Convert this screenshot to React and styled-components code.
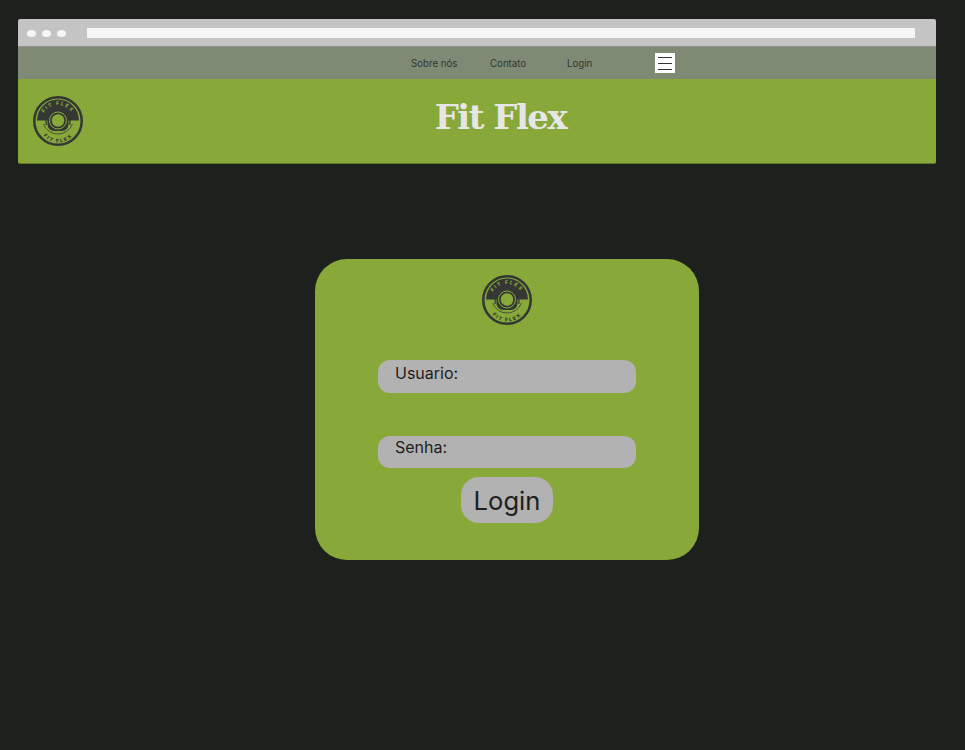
import React from "react";
import styled, { createGlobalStyle } from "styled-components";

const GlobalStyle = createGlobalStyle`
  html, body {
    margin: 0;
    padding: 0;
    background: #1e201d;
  }
  * {
    box-sizing: border-box;
  }
`;

const Logo = ({ size, id }) => (
  <LogoSvg width={size} height={size} viewBox="0 0 100 100">
    <defs>
      <path id={`${id}-top`} d="M 18 50 A 32 32 0 0 1 82 50" />
      <path id={`${id}-bottom`} d="M 11 54 A 39 39 0 0 0 89 54" />
    </defs>
    <circle cx="50" cy="50" r="47.5" fill="none" stroke="#343733" strokeWidth="5" />
    <path d="M 8 49 A 42 42 0 0 1 92 49 Z" fill="#343733" />
    <path d="M 21 56 A 31 31 0 0 0 79 56" fill="none" stroke="#343733" strokeWidth="1.5" />
    <rect x="29" y="29" width="42" height="41" rx="13" fill="#343733" />
    <circle cx="50" cy="49" r="17" fill="none" stroke="#8aa93b" strokeWidth="2" />
    <circle cx="50" cy="49" r="12.5" fill="#8aa93b" />
    <rect x="25" y="36" width="2.5" height="22" fill="#343733" />
    <rect x="72.5" y="36" width="2.5" height="22" fill="#343733" />
    <LogoText fill="#8aa93b">
      <textPath href={`#${id}-top`} startOffset="50%" textAnchor="middle">FIT FLEX</textPath>
    </LogoText>
    <LogoText fill="#343733">
      <textPath href={`#${id}-bottom`} startOffset="50%" textAnchor="middle">FIT FLEX</textPath>
    </LogoText>
  </LogoSvg>
);

const App = () => {
  return (
    <Page>
      <GlobalStyle />
      <BrowserBar>
        <Dots>
          <Dot />
          <Dot />
          <Dot />
        </Dots>
        <AddressBar />
      </BrowserBar>
      <Nav>
        <NavLink $width={79}>Sobre nós</NavLink>
        <NavLink $width={77}>Contato</NavLink>
        <NavLink $width={88}>Login</NavLink>
        <MenuButton>
          <MenuLine />
          <MenuLine />
          <MenuLine />
        </MenuButton>
      </Nav>
      <Header>
        <Logo size={50} id="header-logo" />
        <Title>Fit Flex</Title>
      </Header>
      <Main>
        <Card>
          <Logo size={50} id="card-logo" />
          <Field $height={33} $top={35} $pad={3}>Usuario:</Field>
          <Field $height={32} $top={43} $pad={1}>Senha:</Field>
          <LoginButton>Login</LoginButton>
        </Card>
      </Main>
    </Page>
  );
};

const Page = styled.div`
  width: 965px;
  height: 750px;
  padding: 19px 29px 0 18px;
  overflow: hidden;
  background: #1e201d;
  font-family: Inter, "Liberation Sans", sans-serif;
`;

const BrowserBar = styled.div`
  height: 28px;
  display: flex;
  align-items: center;
  gap: 21px;
  padding: 1px 21px 0 9px;
  background: #c4c4c4;
  border-bottom: 1px solid #8f918c;
  border-radius: 2px 2px 0 0;
`;

const Dots = styled.div`
  display: flex;
  gap: 6px;
`;

const Dot = styled.span`
  width: 9px;
  height: 7px;
  border-radius: 50%;
  background: #f6f6f6;
`;

const AddressBar = styled.div`
  flex: 1;
  height: 10px;
  background: #f6f6f6;
`;

const Nav = styled.nav`
  height: 32px;
  display: flex;
  align-items: center;
  padding-left: 393px;
  background: #7f8a75;
`;

const NavLink = styled.a`
  width: ${(p) => p.$width}px;
  font-size: 9.7px;
  color: #333631;
`;

const MenuButton = styled.div`
  width: 20px;
  height: 20px;
  display: flex;
  flex-direction: column;
  justify-content: center;
  gap: 5px;
  padding: 0 3px;
  background: #fdfdfd;
`;

const MenuLine = styled.span`
  height: 1px;
  background: #333631;
`;

const Header = styled.header`
  height: 85px;
  display: grid;
  grid-template-columns: 50px 1fr;
  align-items: center;
  padding: 0 15px;
  background: #88a83a;
  border-bottom: 1px solid #5f7728;
  border-radius: 0 0 2px 2px;
`;

const LogoSvg = styled.svg`
  display: block;
  flex-shrink: 0;
`;

const LogoText = styled.text`
  font-family: Inter, sans-serif;
  font-size: 10px;
  font-weight: 800;
  letter-spacing: 3px;
`;

const Title = styled.h1`
  margin: 0 0 8px;
  padding-right: 3px;
  text-align: center;
  font-family: "DejaVu Serif", "Liberation Serif", serif;
  font-size: 34px;
  font-weight: 700;
  letter-spacing: -1.5px;
  color: #e6e6e6;
`;

const Main = styled.main`
  padding: 95px 0 0 297px;
`;

const Card = styled.section`
  width: 384px;
  height: 301px;
  display: flex;
  flex-direction: column;
  align-items: center;
  padding-top: 16px;
  background: #88a83a;
  border-radius: 32px;
`;

const Field = styled.div`
  width: 258px;
  height: ${(p) => p.$height}px;
  margin-top: ${(p) => p.$top}px;
  padding: ${(p) => p.$pad}px 0 0 17px;
  background: #b2b2b2;
  border-radius: 12px;
  font-size: 16px;
  line-height: 20px;
  color: #1e201d;
`;

const LoginButton = styled.button`
  width: 92px;
  height: 46px;
  margin-top: 9px;
  padding: 0;
  border: none;
  border-radius: 18px;
  background: #b2b2b2;
  font-family: Inter, "Liberation Sans", sans-serif;
  font-size: 25.6px;
  color: #1e201d;
`;

export default App;
